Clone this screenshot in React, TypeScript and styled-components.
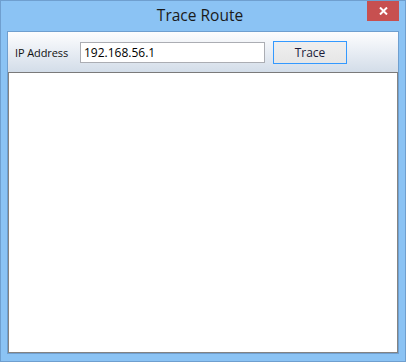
import styled, { createGlobalStyle } from "styled-components";

const GlobalStyle = createGlobalStyle`
  html, body {
    margin: 0;
    padding: 0;
    background: #8bc3f4;
  }
  * {
    box-sizing: border-box;
  }
`;

const Window = styled.div`
  width: 406px;
  height: 362px;
  display: flex;
  flex-direction: column;
  background: #8bc3f4;
  border: 1px solid #6f9fcf;
  font-family: "Open Sans", "Noto Sans", sans-serif;
`;

const TitleBar = styled.div`
  height: 30px;
  display: grid;
  grid-template-columns: 1fr auto 1fr;
  align-items: start;
  padding-right: 6px;
`;

const Title = styled.div`
  grid-column: 2;
  padding-top: 4px;
  font-size: 15.5px;
  line-height: 20px;
  color: #1a1a1a;
`;

const CloseButton = styled.button`
  grid-column: 3;
  justify-self: end;
  width: 32px;
  height: 20px;
  border: 0;
  padding: 0;
  background: #c75050;
  display: flex;
  align-items: center;
  justify-content: center;
`;

const Client = styled.div`
  flex: 1;
  margin: 0 6px 7px 6px;
  border: 1px solid #6f9fcf;
  display: flex;
  flex-direction: column;
  background: #ffffff;
`;

const Toolbar = styled.div`
  height: 40px;
  display: flex;
  align-items: center;
  padding: 0 0 0 7px;
  background: linear-gradient(#fdfdfe, #d3dde9);
`;

const Label = styled.span`
  width: 65px;
  font-size: 11px;
  letter-spacing: -0.1px;
  color: #111;
  margin-top: 1px;
`;

const AddressInput = styled.input`
  width: 185px;
  height: 21px;
  border: 1px solid #abadb3;
  background: #fff;
  padding: 0 3px;
  font-family: inherit;
  font-size: 12px;
  color: #000;
  margin-top: 1px;
  outline: none;
`;

const TraceButton = styled.button`
  width: 74px;
  height: 23px;
  margin-left: 8px;
  border: 1px solid #3399ff;
  background: linear-gradient(#efefef, #e6e6e6);
  font-family: inherit;
  font-size: 12px;
  color: #1c1c3a;
  padding: 0;
`;

const ResultList = styled.div`
  flex: 1;
  border: 1px solid #838383;
  border-top-color: #7a7a7a;
  background: #fff;
`;

export default function App() {
  return (
    <>
      <GlobalStyle />
      <Window>
        <TitleBar>
          <Title>Trace Route</Title>
          <CloseButton aria-label="Close">
            <svg width="9" height="8" viewBox="0 0 9 8">
              <path d="M1 0.5 L8 7.5 M8 0.5 L1 7.5" stroke="#fff" strokeWidth="2" />
            </svg>
          </CloseButton>
        </TitleBar>
        <Client>
          <Toolbar>
            <Label>IP Address</Label>
            <AddressInput defaultValue="192.168.56.1" />
            <TraceButton>Trace</TraceButton>
          </Toolbar>
          <ResultList />
        </Client>
      </Window>
    </>
  );
}
